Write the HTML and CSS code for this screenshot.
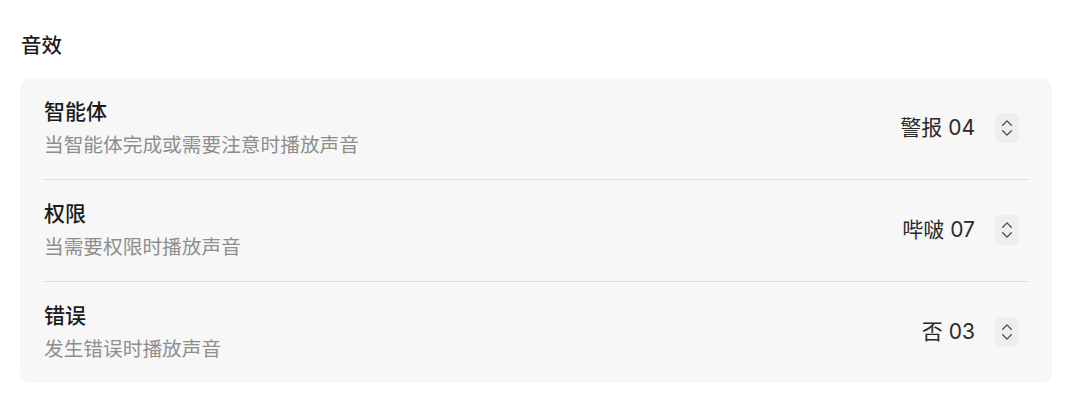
FILE: index.html
```html
<!DOCTYPE html>
<html lang="zh-CN">
<head>
<meta charset="utf-8">
<title>音效</title>
<link rel="stylesheet" href="styles.css">
</head>
<body>
<section class="settings">
  <h2 class="section-title">音效</h2>
  <div class="card">
    <div class="row">
      <div class="text">
        <div class="row-title">智能体</div>
        <div class="row-desc">当智能体完成或需要注意时播放声音</div>
      </div>
      <div class="select">
        <span class="select-value">警报 04</span>
        <span class="select-btn"><svg width="12" height="18" viewBox="0 0 12 18"><path d="M1.7 6.2 L6 1.9 L10.3 6.2 M1.7 11.8 L6 16.1 L10.3 11.8" fill="none" stroke="#4a4a4a" stroke-width="1.3" stroke-linecap="round" stroke-linejoin="round"/></svg></span>
      </div>
    </div>
    <div class="row">
      <div class="text">
        <div class="row-title">权限</div>
        <div class="row-desc">当需要权限时播放声音</div>
      </div>
      <div class="select">
        <span class="select-value">哔啵 07</span>
        <span class="select-btn"><svg width="12" height="18" viewBox="0 0 12 18"><path d="M1.7 6.2 L6 1.9 L10.3 6.2 M1.7 11.8 L6 16.1 L10.3 11.8" fill="none" stroke="#4a4a4a" stroke-width="1.3" stroke-linecap="round" stroke-linejoin="round"/></svg></span>
      </div>
    </div>
    <div class="row">
      <div class="text">
        <div class="row-title">错误</div>
        <div class="row-desc">发生错误时播放声音</div>
      </div>
      <div class="select">
        <span class="select-value">否 03</span>
        <span class="select-btn"><svg width="12" height="18" viewBox="0 0 12 18"><path d="M1.7 6.2 L6 1.9 L10.3 6.2 M1.7 11.8 L6 16.1 L10.3 11.8" fill="none" stroke="#4a4a4a" stroke-width="1.3" stroke-linecap="round" stroke-linejoin="round"/></svg></span>
      </div>
    </div>
  </div>
</section>
</body>
</html>
```

FILE: styles.css
```css
html, body {
  margin: 0;
  padding: 0;
  background: #ffffff;
}

body {
  font-family: "Inter", "Noto Sans CJK SC", "Noto Sans", sans-serif;
  color: #1c1c1c;
}

.settings {
  padding: 31px 28px 0 20px;
}

.section-title {
  margin: 0 0 17px 1px;
  font-size: 20.5px;
  line-height: 30px;
  font-weight: 500;
  color: #1c1c1c;
}

.card {
  background: #f7f7f7;
  border-radius: 11px;
  padding: 0 24px;
}

.row {
  display: flex;
  align-items: center;
  justify-content: space-between;
  padding: 19px 0 20px;
  border-bottom: 1px solid #dddddd;
}

.row:last-child {
  border-bottom: none;
}

.text {
  display: flex;
  flex-direction: column;
  gap: 4px;
}

.row-title {
  font-size: 21px;
  line-height: 30px;
  font-weight: 500;
  color: #1c1c1c;
}

.row-desc {
  font-size: 19.7px;
  line-height: 28px;
  color: #8e8e8e;
}

.select {
  display: flex;
  align-items: center;
  gap: 20px;
  padding-right: 9px;
}

.select-value {
  font-size: 21px;
  line-height: 30px;
  color: #2a2a2a;
}

.select-btn {
  width: 24px;
  height: 30px;
  border-radius: 6px;
  background: #efeded;
  display: flex;
  align-items: center;
  justify-content: center;
}
```
